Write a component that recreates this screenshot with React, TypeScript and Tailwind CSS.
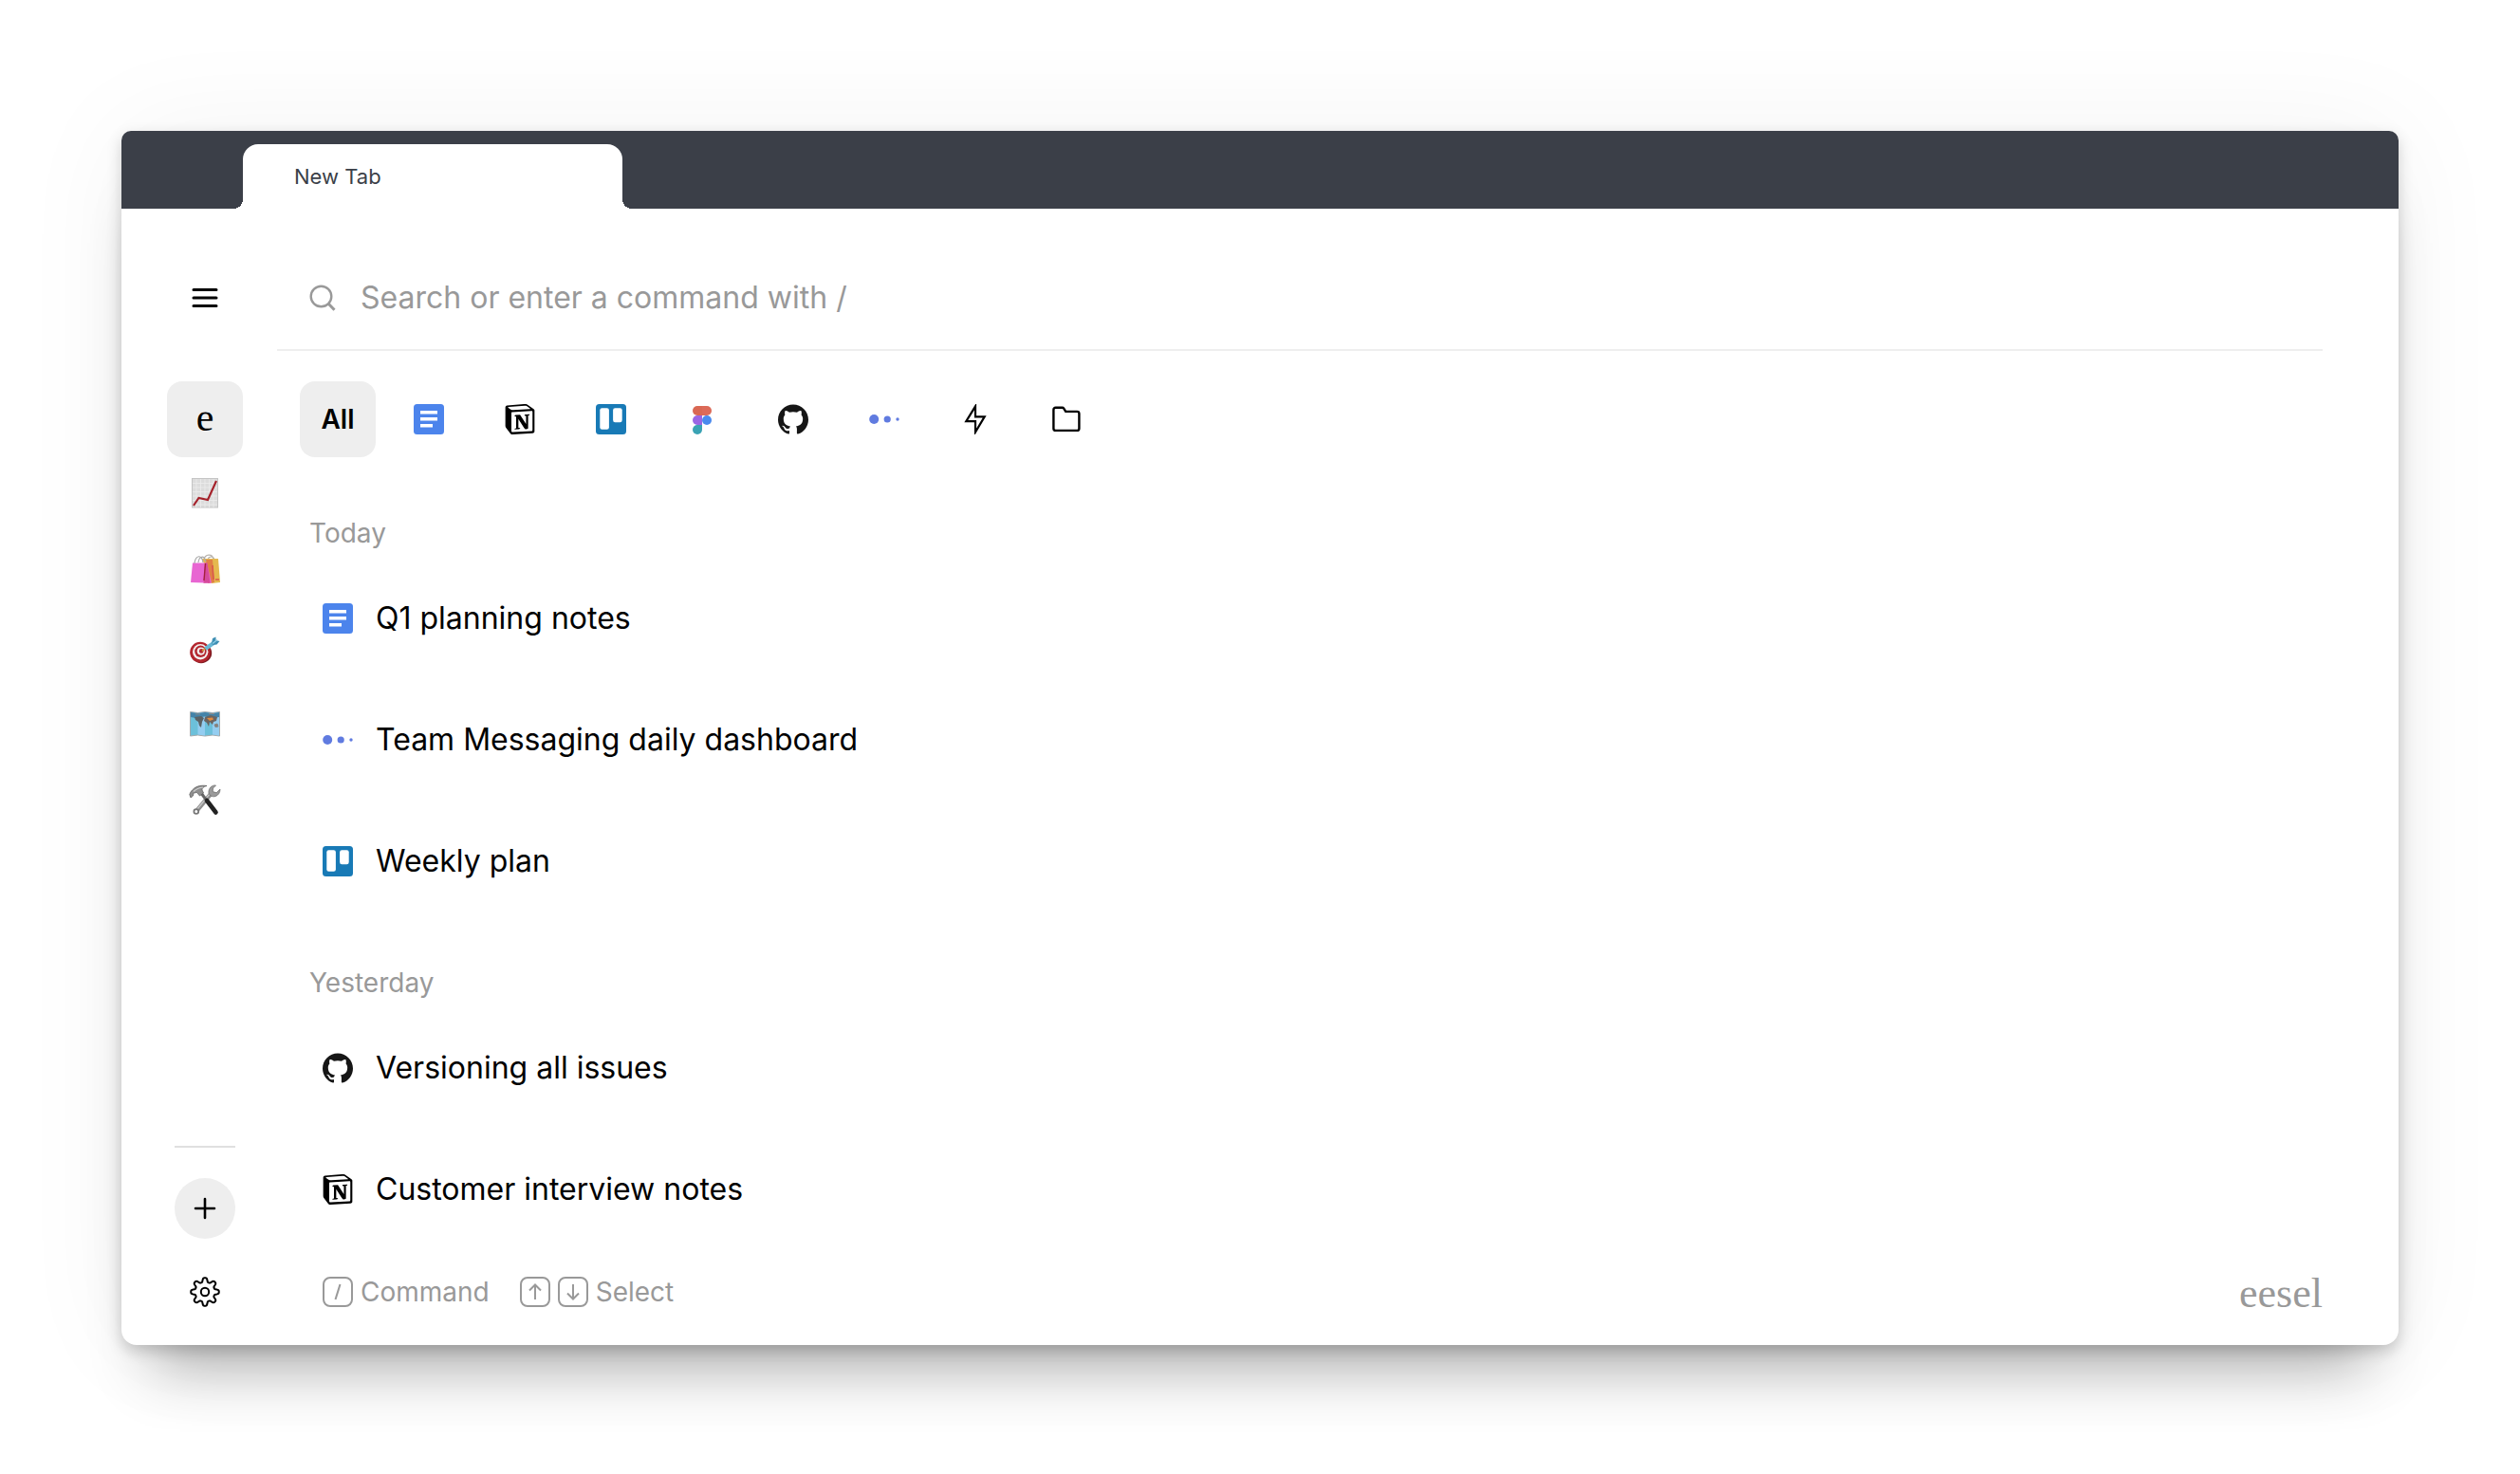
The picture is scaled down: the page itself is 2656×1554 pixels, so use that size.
import { useState, type ReactNode } from 'react';
import { SiGithub, SiNotion } from 'react-icons/si';

type IconName = 'docs' | 'notion' | 'trello' | 'figma' | 'github' | 'dots' | 'bolt' | 'folder';

interface Doc {
  title: string;
  icon: IconName;
}

const filters: { id: IconName; label: string }[] = [
  { id: 'docs', label: 'Docs' },
  { id: 'notion', label: 'Notion' },
  { id: 'trello', label: 'Trello' },
  { id: 'figma', label: 'Figma' },
  { id: 'github', label: 'GitHub' },
  { id: 'dots', label: 'Dashboards' },
  { id: 'bolt', label: 'Commands' },
  { id: 'folder', label: 'Folders' },
];

const sections: { label: string; docs: Doc[] }[] = [
  {
    label: 'Today',
    docs: [
      { title: 'Q1 planning notes', icon: 'docs' },
      { title: 'Team Messaging daily dashboard', icon: 'dots' },
      { title: 'Weekly plan', icon: 'trello' },
    ],
  },
  {
    label: 'Yesterday',
    docs: [
      { title: 'Versioning all issues', icon: 'github' },
      { title: 'Customer interview notes', icon: 'notion' },
    ],
  },
];

// Eight soft teeth around the centre of a 32x32 box
const gearPath =
  Array.from({ length: 160 }, (_, i) => {
    const a = (i / 160) * Math.PI * 2;
    const r = 12.6 + 2.3 * Math.tanh(1.8 * Math.cos(8 * a));
    const x = 16 + r * Math.cos(a);
    const y = 16 + r * Math.sin(a);
    return `${i === 0 ? 'M' : 'L'}${x.toFixed(2)} ${y.toFixed(2)}`;
  }).join('') + 'Z';

function AppIcon({ name }: { name: IconName }) {
  if (name === 'github') return <SiGithub className="size-8 shrink-0 text-[#161616]" />;
  if (name === 'notion') return <SiNotion className="size-8 shrink-0 text-black" />;

  return (
    <svg viewBox="0 0 32 32" className="size-8 shrink-0" fill="none" aria-hidden="true">
      {name === 'docs' && (
        <>
          <rect width="32" height="32" rx="3.5" fill="#4c84ec" />
          <path d="M7 8.8h18M7 15.8h18M7 22.8h13" stroke="#fff" strokeWidth="3.6" />
        </>
      )}
      {name === 'trello' && (
        <>
          <rect width="32" height="32" rx="3.5" fill="#187ab6" />
          <rect x="4.3" y="4.3" width="9.6" height="22.4" rx="2.2" fill="#fff" />
          <rect x="18.1" y="4.3" width="9.6" height="15" rx="2.2" fill="#fff" />
        </>
      )}
      {name === 'figma' && (
        <>
          <path d="M11 2h5v10h-5a5 5 0 0 1 0-10Z" fill="#d96853" />
          <path d="M16 2h5a5 5 0 0 1 0 10h-5Z" fill="#dc6a58" />
          <path d="M11 12h5v10h-5a5 5 0 0 1 0-10Z" fill="#9a66e4" />
          <circle cx="21" cy="17" r="5" fill="#4a8aee" />
          <path d="M11 22h5v5a5 5 0 1 1-5-5Z" fill="#3aa3b4" />
        </>
      )}
      {name === 'dots' && (
        <g fill="#607be0">
          <circle cx="5.2" cy="16" r="5" />
          <circle cx="19.2" cy="16" r="3.6" />
          <circle cx="30" cy="16" r="1.7" />
        </g>
      )}
      {name === 'bolt' && (
        <path
          d="M16 2.4 6.3 18.2H16v11.4l9.7-16.2H16Z"
          stroke="#000"
          strokeWidth="2.2"
          strokeMiterlimit="10"
        />
      )}
      {name === 'folder' && (
        <path
          d="M2.4 6a2.2 2.2 0 0 1 2.2-2.2h6.9a2 2 0 0 1 1.7.9l2 3.2h12a2.2 2.2 0 0 1 2.2 2.2v15.6a2.2 2.2 0 0 1-2.2 2.2H4.6a2.2 2.2 0 0 1-2.2-2.2Z"
          stroke="#000"
          strokeWidth="2.4"
        />
      )}
    </svg>
  );
}

function ChartEmoji() {
  return (
    <svg viewBox="0 0 40 40" className="size-10" fill="none" aria-hidden="true">
      <rect x="6.5" y="2.5" width="27" height="30.5" fill="#dcdcdc" stroke="#c4c4c4" />
      <path
        d="M11 3v30M15.5 3v30M20 3v30M24.5 3v30M29 3v30M7 7.5h26M7 12h26M7 16.5h26M7 21h26M7 25.5h26M7 30h26"
        stroke="#ececec"
        strokeWidth="0.8"
      />
      <path d="M8 31l5.5-8 9.5 2L32 5" stroke="#a5222b" strokeWidth="2.2" />
    </svg>
  );
}

function BagsEmoji() {
  return (
    <svg viewBox="0 0 40 40" className="size-10" fill="none" aria-hidden="true">
      <path d="M19 8c1-6 9-7 10 0M23 8c1-4 6-4 7 0" stroke="#b9b4ae" strokeWidth="1.2" />
      <path d="M17 7h17l2 25-9 1Z" fill="#e5b94f" />
      <path d="M21 8h7l2 24-7 1Z" fill="#e07f45" />
      <path d="M28 14l1 15M31 29h4" stroke="#d9584c" strokeWidth="1.6" />
      <path d="M7 11.5h15l5 21.3-22-.8Z" fill="#e866d2" />
      <path d="M20 11.5h2.5l3 21-7 .2Z" fill="#d64a9c" />
      <path d="M20.5 12 19 30" stroke="#a3203c" strokeWidth="1.4" />
      <path d="M9 12c1-9 8-10 9-1M13 11c1-7 6-8 8-1" stroke="#a9a9a9" strokeWidth="1.2" />
    </svg>
  );
}

function TargetEmoji() {
  return (
    <svg viewBox="0 0 40 40" className="size-10" fill="none" aria-hidden="true">
      <ellipse cx="16" cy="26.6" rx="11.2" ry="10.6" fill="#7c1a20" />
      <circle cx="15" cy="25.6" r="10.8" fill="#b3262e" />
      <circle cx="15.2" cy="25.2" r="8.2" fill="#f3eeee" />
      <circle cx="15.4" cy="24.8" r="6.2" fill="#b3262e" />
      <circle cx="15.8" cy="24.6" r="4.1" fill="#f3eeee" />
      <circle cx="16.2" cy="24.4" r="2.3" fill="#b3262e" />
      <path d="M17 24.4 21 21" stroke="#c99a3a" strokeWidth="1.4" />
      <path d="M20.5 22 29 16" stroke="#68b7d4" strokeWidth="4" />
      <path d="m27 16.5 1-5.5 3.5-1.5V13l4 1-3 3.5-4 .5Z" fill="#3f8fb4" />
      <path d="M28 16.5 33 12.5" stroke="#8fd0e6" strokeWidth="1.2" />
    </svg>
  );
}

function MapEmoji() {
  return (
    <svg viewBox="0 0 40 40" className="size-10" fill="none" aria-hidden="true">
      <path d="m4.5 8.5 8 1 7.5-1 8 1 7.5-1V34l-7.5-1-8 1-7.5-1-8 1Z" fill="#6cc0da" stroke="#a5a9ab" />
      <path d="M12.5 10v22.5l7.5 1V9ZM28 10v22.5l7 1V9Z" fill="#94cdf0" />
      <path d="M5 9l7.5 1L20 9l8 1 7-1v5l-6 1-9-1.5L10 15l-5-1Z" fill="#4483a8" />
      <path d="m9 14 7-1 3 2-2 4-1 6-2-2-1-4-3-2Z" fill="#5b6265" />
      <path d="m20 14 6-2 7 2-1 4-3 1-1 3-3-3-1 5-2-4-3-2Z" fill="#6a6461" />
      <path d="m22 15 6-.5 1 2-4 1.5Z" fill="#e08a3e" />
      <path d="M30 22l3-1 1 3-3 .5ZM10 11h5M24 10.5h6" fill="#8a7f76" stroke="#84898b" />
    </svg>
  );
}

function ToolsEmoji() {
  return (
    <svg viewBox="0 0 40 40" className="size-10" fill="none" aria-hidden="true">
      <path d="M27 14 12 32" stroke="#8d8d8d" strokeWidth="4.4" />
      <path d="M25.5 14.5 12 31" stroke="#c4c4c4" strokeWidth="1.4" />
      <circle cx="10.8" cy="33.5" r="2.4" stroke="#777" strokeWidth="1.8" />
      <path
        d="M31.5 6c-4-.5-8 3-7.5 8 1 3 4 4.5 7 3.5 3-.8 5-4 5-7.5l-3.8 3.8-4-1.2.3-3.6Z"
        fill="#9b9b9b"
        stroke="#6f6f6f"
        strokeWidth="0.8"
      />
      <path d="m16 14 8 11" stroke="#666" strokeWidth="3" />
      <path d="m22 22 9.5 12.5" stroke="#222" strokeWidth="4.6" strokeLinecap="round" />
      <path
        d="M5 13c4-6 10-7.5 17-6.5-4 1-5 2.5-5 4.5l1.5 3-4 3-3-3.5-3.5.5-.5 3L5 19l-1.2-3.5Z"
        fill="#8f8f8f"
        stroke="#5f5f5f"
        strokeWidth="0.8"
      />
      <path d="M8 12.5c3-3 6-4 10-4.5" stroke="#d0d0d0" strokeWidth="1.2" />
    </svg>
  );
}

const spaces: { label: string; icon: ReactNode }[] = [
  { label: 'Growth', icon: <ChartEmoji /> },
  { label: 'Shopping', icon: <BagsEmoji /> },
  { label: 'Goals', icon: <TargetEmoji /> },
  { label: 'Roadmap', icon: <MapEmoji /> },
  { label: 'Tools', icon: <ToolsEmoji /> },
];

function Key({ children }: { children: ReactNode }) {
  return (
    <kbd className="flex size-8 items-center justify-center rounded-lg border-2 border-[#999]">
      <svg viewBox="0 0 28 28" className="size-7 shrink-0" fill="none" stroke="#999" strokeWidth="2" aria-hidden="true">
        {children}
      </svg>
    </kbd>
  );
}

function Sidebar() {
  return (
    <aside className="flex w-[164px] shrink-0 flex-col items-center pr-2 pl-5">
      <button aria-label="Menu" className="mt-[54px] flex size-20 items-center justify-center">
        <svg viewBox="0 0 32 32" className="size-8" aria-hidden="true">
          <path d="M4 7.5h24M4 16h24M4 24.5h24" stroke="#000" strokeWidth="3" strokeLinecap="round" />
        </svg>
      </button>
      <nav aria-label="Spaces" className="mt-12 flex flex-col">
        <button
          aria-label="eesel"
          className="flex size-20 items-center justify-center rounded-2xl bg-[#eee] pb-1 font-['Liberation_Serif',serif] text-[42px] leading-10 text-black"
        >
          e
        </button>
        {spaces.map((s) => (
          <button key={s.label} aria-label={s.label} className="flex size-20 items-center justify-center">
            {s.icon}
          </button>
        ))}
      </nav>
      <div className="mt-auto flex flex-col items-center pb-6">
        <hr className="mb-8 w-16 border-t-2 border-[#e0e0e0]" />
        <button aria-label="Add" className="flex size-16 items-center justify-center rounded-full bg-[#eee]">
          <svg viewBox="0 0 32 32" className="size-8" aria-hidden="true">
            <path d="M16 6v20M6 16h20" stroke="#000" strokeWidth="2.6" strokeLinecap="round" />
          </svg>
        </button>
        <button aria-label="Settings" className="mt-6 flex size-16 items-center justify-center">
          <svg viewBox="0 0 32 32" className="size-8" fill="none" stroke="#000" strokeWidth="2" aria-hidden="true">
            <path d={gearPath} strokeLinejoin="round" />
            <circle cx="16" cy="16" r="4.2" />
          </svg>
        </button>
      </div>
    </aside>
  );
}

export default function App() {
  const [active, setActive] = useState<string>('all');
  const [query, setQuery] = useState('');

  return (
    <div className="flex min-h-screen bg-white px-32 pt-[138px] pb-[136px] font-['Inter','Liberation_Sans',sans-serif] text-black">
      <div className="flex w-full flex-col rounded-t-[10px] rounded-b-2xl bg-white shadow-[0_0_120px_rgba(0,0,0,0.05),0_6px_16px_rgba(0,0,0,0.18),0_56px_60px_-32px_rgba(0,0,0,0.3)]">
        {/* Tab strip */}
        <header className="flex rounded-t-[10px] bg-[#3b3f48] pt-[14px] pl-[128px]">
          <div className="relative flex h-[68px] w-[400px] items-center rounded-t-2xl bg-white px-[54px] text-[22px] text-[#3b3f48]">
            <span className="absolute bottom-0 -left-2.5 size-2.5 bg-[radial-gradient(circle_at_0_0,transparent_10px,#fff_10px)]" />
            New Tab
            <span className="absolute -right-2.5 bottom-0 size-2.5 bg-[radial-gradient(circle_at_100%_0,transparent_10px,#fff_10px)]" />
          </div>
        </header>

        <div className="flex flex-1">
          <Sidebar />

          <main className="flex min-w-0 flex-1 flex-col pr-20">
            {/* Search */}
            <label className="mt-10 flex h-[110px] items-center gap-6 border-b-2 border-[#eee] pl-8">
              <svg viewBox="0 0 32 32" className="size-8 shrink-0" fill="none" stroke="#999" strokeWidth="2.4" aria-hidden="true">
                <circle cx="14.5" cy="14.5" r="10.8" />
                <path d="m22 22 6.5 6.8" strokeWidth="3" />
              </svg>
              <input
                type="text"
                aria-label="Search"
                value={query}
                onChange={(e) => setQuery(e.target.value)}
                placeholder="Search or enter a command with /"
                className="min-w-0 flex-1 bg-transparent text-[32px] outline-none placeholder:text-[#999]"
              />
            </label>

            {/* Filters */}
            <div className="mt-8 flex gap-4 pl-6">
              <button
                onClick={() => setActive('all')}
                className={`size-20 rounded-2xl text-[28px] font-semibold ${active === 'all' ? 'bg-[#eee]' : ''}`}
              >
                All
              </button>
              {filters.map((f) => (
                <button
                  key={f.id}
                  aria-label={f.label}
                  onClick={() => setActive(f.id)}
                  className={`flex size-20 items-center justify-center rounded-2xl ${active === f.id ? 'bg-[#eee]' : ''}`}
                >
                  <AppIcon name={f.id} />
                </button>
              ))}
            </div>

            {/* Recent documents */}
            <div className="mt-4">
              {sections.map((s) => (
                <section key={s.label}>
                  <h2 className="pt-11 pb-1.5 pl-[34px] text-[28px] leading-10 text-[#999]">{s.label}</h2>
                  <ul>
                    {s.docs.map((d) => (
                      <li key={d.title}>
                        <a href="#" className="flex h-32 items-center gap-6 pl-12 text-[32px]">
                          <AppIcon name={d.icon} />
                          {d.title}
                        </a>
                      </li>
                    ))}
                  </ul>
                </section>
              ))}
            </div>

            {/* Shortcuts */}
            <footer className="mt-auto flex items-center pb-[34px] pl-12 text-[28px] leading-10 text-[#999]">
              <Key>
                <path d="m16.5 6-5 16" />
              </Key>
              <span className="ml-2">Command</span>
              <span className="ml-8 flex gap-2">
                <Key>
                  <path d="M14 22V7M8 12.5 14 6.5l6 6" />
                </Key>
                <Key>
                  <path d="M14 6v15M8 15.5l6 6 6-6" />
                </Key>
              </span>
              <span className="ml-2">Select</span>
              <span className="ml-auto pt-1 font-['Liberation_Serif',serif] text-[44px] leading-10">eesel</span>
            </footer>
          </main>
        </div>
      </div>
    </div>
  );
}
